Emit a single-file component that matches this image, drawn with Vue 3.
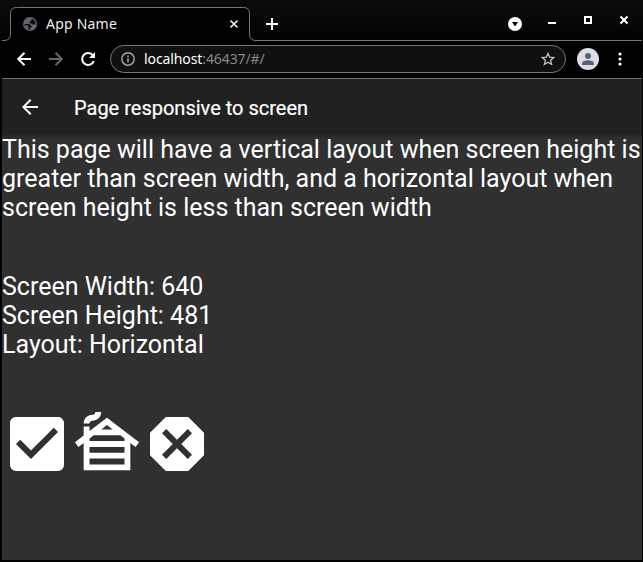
<script setup>
const intro = 'This page will have a vertical layout when screen height is greater than screen width, and a horizontal layout when screen height is less than screen width'
const details = ['Screen Width: 640', 'Screen Height: 481', 'Layout: Horizontal']
</script>

<template>
  <div class="window">
    <header class="tabs">
      <svg class="tab-shape" width="643" height="42" viewBox="0 0 643 42">
        <path d="M2 40.500H4Q10.500 40.500 10.500 34V13.500Q10.500 7.500 16.500 7.500H243.500Q249.500 7.500 249.500 13.500V34Q249.500 40.500 256 40.500H642V42H2Z" fill="#000" />
        <path d="M2 40.500H4Q10.500 40.500 10.500 34V13.500Q10.500 7.500 16.500 7.500H243.500Q249.500 7.500 249.500 13.500V34Q249.500 40.500 256 40.500H642" fill="none" stroke="#777" />
      </svg>
      <div class="tab">
        <svg class="globe" width="14" height="14" viewBox="0 0 14 14">
          <circle cx="7" cy="7" r="7" fill="#64666d" />
          <path d="M8.800 1.700C11 2.500 12.500 4.500 12.500 7L11.500 7.600H9.700L8.800 6.400H6.800L6.300 5.200L7.200 4.200H8.200Z" fill="#0a0a0b" />
          <path d="M1.500 7H5.500C7 7 7.800 7.800 7.800 9H9V10.300H7.200V12.500C4 12.500 1.500 10.200 1.500 7Z" fill="#0a0a0b" />
          <path d="M1.800 8.300H4.300L5.600 9.700V12.200C3.500 11.600 2.200 10.300 1.800 8.300Z" fill="#64666d" />
        </svg>
        <span class="tab-title">App Name</span>
        <svg class="tab-close" width="10" height="10" viewBox="0 0 10 10"><path d="M1.500 1.500L8.500 8.500M8.500 1.500L1.500 8.500" stroke="#eee" stroke-width="1.700" /></svg>
      </div>
      <svg class="plus" width="12" height="12" viewBox="0 0 12 12"><path d="M6 0V12M0 6H12" stroke="#fff" stroke-width="2" /></svg>
      <svg class="controls" width="122" height="18" viewBox="508 14 122 18">
        <circle cx="515" cy="24" r="7" fill="#fff" /><path d="M512 22H518L515 26.500Z" fill="#000" />
        <path d="M548 23H556" stroke="#fff" stroke-width="2" />
        <rect x="585" y="17" width="6" height="6" fill="none" stroke="#fff" stroke-width="2" />
        <path d="M620.500 16.500L627.500 23.500M627.500 16.500L620.500 23.500" stroke="#fff" stroke-width="2" />
      </svg>
    </header>
    <nav class="toolbar">
      <svg class="nav-icons" width="82" height="16" viewBox="16 51 82 16" fill="none" stroke-width="2">
        <path d="M31 59H18.500M24.500 52.700L18.200 59L24.500 65.300" stroke="#fff" />
        <path d="M49 59H61.500M55.500 52.700L61.800 59L55.500 65.300" stroke="#666" />
        <path d="M92.800 55.200A6 6 0 1 0 93.800 61" stroke="#fff" /><path d="M95 52V58H89Z" fill="#fff" />
      </svg>
      <div class="address">
        <svg class="info" width="14" height="14" viewBox="0 0 14 14"><circle cx="7" cy="7" r="6.200" fill="none" stroke="#a0a2a6" stroke-width="1.500" /><path d="M7 3.500V5M7 6V10.500" stroke="#a0a2a6" stroke-width="1.500" /></svg>
        <span class="url">localhost<span class="url-rest">:46437/#/</span></span>
        <svg class="star" width="14" height="14" viewBox="0 0 14 14"><path d="M7 1.400L8.600 5.200L12.800 5.600L9.600 8.300L10.600 12.400L7 10.200L3.400 12.400L4.400 8.300L1.200 5.600L5.400 5.200Z" fill="none" stroke="#c0c0c0" stroke-width="1.300" /></svg>
      </div>
      <svg class="avatar" width="22" height="22" viewBox="0 0 22 22"><circle cx="11" cy="11" r="11" fill="#dddfe5" /><circle cx="11" cy="8" r="3" fill="#58617a" /><path d="M5 17V15.500C5 13.500 8.500 12.300 11 12.300S17 13.500 17 15.500V17Z" fill="#58617a" /></svg>
      <svg class="dots" width="4" height="14" viewBox="0 0 4 14" fill="#fff"><circle cx="2" cy="2" r="1.600" /><circle cx="2" cy="7" r="1.600" /><circle cx="2" cy="12" r="1.600" /></svg>
    </nav>
    <div class="page">
      <div class="app-bar">
        <svg width="24" height="24" viewBox="0 0 24 24"><path d="M20 11H7.830L13.420 5.410L12 4L4 12L12 20L13.410 18.590L7.830 13H20Z" fill="#fff" /></svg>
        <h1>Page responsive to screen</h1>
      </div>
      <main>
        <p class="intro">{{ intro }}</p>
        <div class="details"><div v-for="line in details" :key="line">{{ line }}</div></div>
        <div class="icons">
          <svg viewBox="0 0 24 24"><path d="M10 17L5 12L6.410 10.580L10 14.170L17.590 6.580L19 8M19 3H5C3.890 3 3 3.890 3 5V19A2 2 0 0 0 5 21H19A2 2 0 0 0 21 19V5C21 3.890 20.100 3 19 3Z" /></svg>
          <svg viewBox="0 0 24 24"><path fill-rule="evenodd" d="M10 1C10 2.660 8.660 4 7 4C6.450 4 6 4.450 6 5H4C4 3.340 5.340 2 7 2C7.550 2 8 1.550 8 1ZM12 3L6 7.580V6H4V9.110L1 11.400L2.210 12.990L4 11.620V21H20V11.620L21.790 12.990L23 11.400ZM13.940 7H10.060L12 5.520ZM7.440 9H16.560L18 10.100V11H6V10.100ZM18 13V15H6V13ZM6 19V17H18V19Z" /></svg>
          <svg viewBox="0 0 24 24"><path d="M8.270 3L3 8.270V15.730L8.270 21H15.730L21 15.730V8.270L15.730 3M8.410 7L12 10.590L15.590 7L17 8.410L13.410 12L17 15.590L15.590 17L12 13.410L8.410 17L7 15.590L10.590 12L7 8.410" /></svg>
        </div>
      </main>
    </div>
  </div>
</template>

<style>
body { margin: 0; background: #000; }
</style>

<style scoped>
.window { width: 643px; height: 562px; box-sizing: border-box; background: #000; overflow: hidden; display: flex; flex-direction: column; font-family: "Noto Sans", sans-serif; }
svg { display: block; flex: none; }
.tabs { position: relative; height: 42px; display: flex; background: linear-gradient(#0c0c0c, #020202); }
.tab-shape { position: absolute; left: 0; top: 0; }
.tab { position: relative; width: 250px; height: 42px; box-sizing: border-box; padding: 8px 11px 2px 23px; display: flex; align-items: center; }
.tab-title { margin-left: 9px; font-size: 14px; line-height: 20px; color: #eee; flex: 1; letter-spacing: 0.220px; }
.plus { position: relative; margin: 18px 0 0 16px; }
.controls { position: relative; margin: 14px 13px 0 auto; }
.toolbar { height: 37px; margin: 0 1px 0 2px; padding: 0 18px 2px 14px; box-sizing: border-box; display: flex; align-items: center; border-bottom: 1px solid #777; }
.address { width: 456px; height: 28px; box-sizing: border-box; margin-left: 12px; padding: 0 10px; border: 1px solid #777; border-radius: 14px; background: #101010; display: flex; align-items: center; }
.url { flex: 1; margin-left: 9px; font-size: 14px; line-height: 20px; color: #fff; letter-spacing: -0.100px; }
.url-rest { color: #85878a; }
.avatar { margin-left: 11px; }
.dots { margin-left: 19px; }
.page { flex: 1; margin: 0 1px 2px 2px; background: #303030; font-family: Roboto, sans-serif; color: #fff; }
.app-bar { position: relative; height: 56px; box-sizing: border-box; padding-left: 16px; display: flex; align-items: center; gap: 32px; background: #212121; box-shadow: 0 1px 3px rgba(0, 0, 0, 0.300); }
h1 { margin: 2px 0 0; font-size: 20px; line-height: 24px; font-weight: 400; -webkit-text-stroke: 0.200px #fff; }
.intro { margin: 0; }
main { position: relative; font-size: 25px; line-height: 29px; }
.details { margin-top: 50px; }
.icons { display: flex; margin-top: 50px; }
.icons svg { width: 70px; height: 70px; fill: #fff; }
.icons svg:nth-child(odd) { width: 72px; height: 72px; margin: -1px; }
</style>
